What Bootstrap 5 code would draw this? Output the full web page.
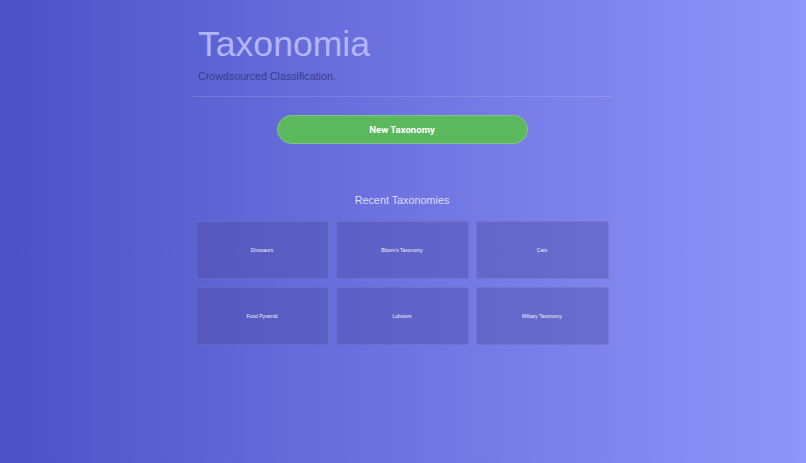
<!DOCTYPE html>
<html lang="en">
<head>
<meta charset="utf-8">
<title>Taxonomia</title>
<link rel="stylesheet" href="https://cdn.jsdelivr.net/npm/bootstrap@5.3.0/dist/css/bootstrap.min.css">
<style>
html, body { height: 100%; }
body { background: linear-gradient(90deg, #4c52c6 0%, #9095fa 100%); font-family: "Liberation Sans", Arial, sans-serif; overflow: hidden; }
.tx-wrap { width: 420px; margin-left: 192px; }
.tx-head { padding: 22px 6px 0; }
.tx-title { font-size: 35.6px; line-height: 44px; font-weight: 400; color: #b2b5f8; margin: 0; font-family: "Liberation Sans", sans-serif; }
.tx-sub { font-size: 10.7px; line-height: 14px; color: #383e90; margin: 3px 0 0; }
.tx-rule { margin: 13px 0 0; border: 0; border-top: 1px solid rgba(255,255,255,.13); opacity: 1; }
.tx-cta { width: 251px; height: 29px; margin-top: 18px; border-radius: 15px; background: #5cb85c; border: 1px solid #7fc48a; color: #fff; font: 700 9.6px/1 Roboto, sans-serif; display: flex; align-items: center; justify-content: center; padding: 0; }
.tx-cta:hover { background: #5cb85c; color: #fff; border-color: #7fc48a; }
.tx-h2 { font-size: 10.8px; line-height: 14px; font-weight: 400; color: #dcdefd; margin: 49px 0 14px; text-align: center; font-family: "Liberation Sans", sans-serif; }
.tx-grid { display: grid; grid-template-columns: repeat(3, 133px); grid-auto-rows: 58px; gap: 8px 7px; justify-content: center; }
.tx-tile { background: rgba(74,76,165,.42); border: 1px solid rgba(255,255,255,.09); color: #f0f0ff; font-size: 5px; text-decoration: none; border-radius: 0; padding-top: 2px; }
</style>
</head>
<body>
<main class="tx-wrap">
  <header class="tx-head">
    <h1 class="tx-title">Taxonomia</h1>
    <p class="tx-sub">Crowdsourced Classification.</p>
  </header>
  <hr class="tx-rule">
  <div class="d-flex justify-content-center">
    <a href="#" class="btn tx-cta">New Taxonomy</a>
  </div>
  <h2 class="tx-h2">Recent Taxonomies</h2>
  <div class="tx-grid">
    <a href="#" class="tx-tile d-flex align-items-center justify-content-center">Dinosaurs</a>
    <a href="#" class="tx-tile d-flex align-items-center justify-content-center">Bloom's Taxonomy</a>
    <a href="#" class="tx-tile d-flex align-items-center justify-content-center">Cats</a>
    <a href="#" class="tx-tile d-flex align-items-center justify-content-center">Food Pyramid</a>
    <a href="#" class="tx-tile d-flex align-items-center justify-content-center">Lobsters</a>
    <a href="#" class="tx-tile d-flex align-items-center justify-content-center">Military Taxonomy</a>
  </div>
</main>
<script src="https://cdn.jsdelivr.net/npm/bootstrap@5.3.0/dist/js/bootstrap.bundle.min.js"></script>
</body>
</html>
